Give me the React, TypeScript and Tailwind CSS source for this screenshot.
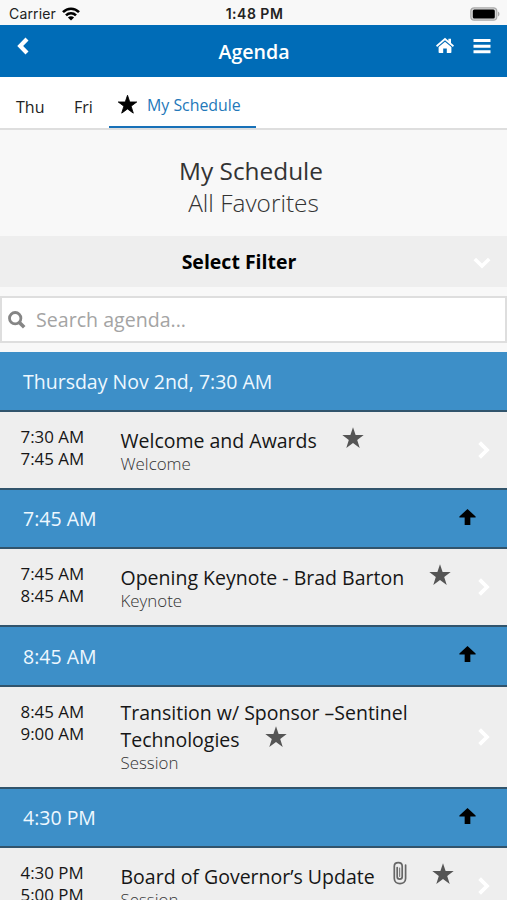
import React from "react";

const Star = ({ className = "" }: { className?: string }) => (
  <svg viewBox="0 0 22 22" className={"inline-block shrink-0 " + className} fill="currentColor">
    <path d="M11 0.3 13.6 8.1H21.7L15.2 12.9 17.7 21 11 16.1 4.3 21 6.8 12.9 0.3 8.1H8.4Z" />
  </svg>
);

const Clip = () => (
  <svg viewBox="0 0 14 24" className="h-6 w-3.5 shrink-0" fill="none" stroke="#666" strokeWidth="1.7" strokeLinecap="round">
    <path d="M4.2 6.5V15.8C4.2 18.9 9.2 18.9 9.2 15.8V5.2C9.2 .4 1.3.4 1.3 5.2V17.5C1.3 24.3 12.6 24.3 12.6 17.5V4" />
    <path d="M6.7 7V15.5" strokeWidth="1" />
  </svg>
);

const Chevron = () => (
  <svg viewBox="0 0 12 18" className="h-[18px] w-3 shrink-0" fill="none" stroke="#fff" strokeWidth="3.8">
    <path d="M1.6 1.6 9 9 1.6 16.4" />
  </svg>
);

function Band({ children, arrow = true, short = false }: { children: React.ReactNode; arrow?: boolean; short?: boolean }) {
  return (
    <div className={"flex items-center justify-between border-b-2 border-[#31546c] bg-[#3d8fc8] pl-[23px] pr-[31px] text-[19.5px] text-[#eef8ff] " + (short ? "h-[59px]" : "h-[60px]")}>
      <span className={short ? "pt-0" : "pt-0.5"}>{children}</span>
      {arrow && (
        <svg viewBox="0 0 18 18" className="mb-1 h-[18px] w-[17px]" fill="#000">
          <path d="M9 0.4 17.6 8.6V9.6H12V17.6H6V9.6H0.4V8.6Z" />
        </svg>
      )}
    </div>
  );
}

function Times({ a, b }: { a: string; b: string }) {
  return (
    <div className="w-[100px] shrink-0 pt-[14px] text-[16.9px] leading-[22px] text-[#161616]">
      <div>{a}</div>
      <div>{b}</div>
    </div>
  );
}

function Row({ a, b, kind, tall = false, children }: { a: string; b: string; kind: string; tall?: boolean; children: React.ReactNode }) {
  return (
    <div className={"flex shrink-0 border-b-2 border-[#31546c] bg-[#eeeeee] pl-[20.5px] pr-[17px] " + (tall ? "h-[102px]" : "h-[78px]")}>
      <Times a={a} b={b} />
      <div className={"min-w-0 flex-1 text-[19.5px] leading-[27px] text-[#161616] " + (tall ? "pt-[12px]" : "pt-[15px]")}>
        {children}
        <div className="text-[16.9px] font-light leading-[20px] text-[#333]">{kind}</div>
      </div>
      <div className="flex items-center">
        <Chevron />
      </div>
    </div>
  );
}

export default function App() {
  return (
    <div className="flex h-[900px] w-[507px] flex-col overflow-hidden bg-[#f8f8f8] font-['Open_Sans',sans-serif] [&>*]:shrink-0">
      <div className="grid h-[25px] grid-cols-3 items-center bg-[#f8f8f8] pl-[9px] pr-[7px] pt-0.5 font-['Inter',sans-serif] text-[14px] text-[#222]">
        <div className="flex items-center gap-[6px]">
          <span className="tracking-[0.15px]">Carrier</span>
          <svg viewBox="0 0 18 14" className="h-3.5 w-[18px]" fill="none" stroke="#000" strokeWidth="2.6">
            <path d="M1 5.2C5.5.6 12.5.6 17 5.2M4 8.4C6.8 5.6 11.2 5.6 14 8.4" />
            <path d="M9 13.5 5.9 10.4C7.6 8.8 10.4 8.8 12.1 10.4Z" fill="#000" stroke="none" />
          </svg>
        </div>
        <div className="text-center font-semibold tracking-[0.5px]">1:48 PM</div>
        <div className="flex justify-end">
          <svg viewBox="0 0 30 14" className="h-3.5 w-[30px]">
            <rect x=".8" y=".8" width="26" height="12.4" rx="3.5" fill="#d8d8d8" stroke="#aaa" strokeWidth="1.2" />
            <rect x="2.8" y="2.5" width="22" height="9" rx="1.5" fill="#000" />
            <path d="M28 4.5C30 5.5 30 8.5 28 9.5Z" fill="#aaa" />
          </svg>
        </div>
      </div>

      <header className="grid h-[52px] grid-cols-3 bg-[#006cb7] pl-[17px] pr-[16px] text-white">
        <svg viewBox="0 0 12 18" className="mt-3 h-[18px] w-3" fill="none" stroke="#fff" strokeWidth="4.2">
          <path d="M10 2 3.2 9 10 16" />
        </svg>
        <h1 className="text-center text-[19.6px] font-semibold leading-[54px]">Agenda</h1>
        <div className="flex justify-end gap-[19px] pt-3">
          <svg viewBox="0 0 18 17" className="h-[17px] w-[18px]" fill="#fff">
            <path d="M9 .8 12.4 3.7V1.8H15V6L18 8.6 16.9 10 9 3.3 1.1 10 0 8.6Z" />
            <path d="M9 4.7 15.4 10.1V15.2Q15.4 16 14.6 16H10.8V11.6H7.2V16H3.4Q2.6 16 2.6 15.2V10.1Z" />
          </svg>
          <svg viewBox="0 0 18 17" className="h-[17px] w-[18px]" fill="#fff">
            <path d="M.5 2H17.5V5H.5ZM.5 7.7H17.5V10.7H.5ZM.5 13.3H17.5V16.3H.5Z" />
          </svg>
        </div>
      </header>

      <nav className="flex h-[53px] border-b-2 border-[#dedede] bg-white pl-4 text-[16px] text-[#222]">
        <span className="w-[58px] leading-[60px]">Thu</span>
        <span className="w-[35px] leading-[60px]">Fri</span>
        <span className="flex w-[147px] border-b-[2.5px] border-[#1871b8] pl-[9px] text-[#2378b9]">
          <Star className="mt-[18px] h-[19px] w-[19px] overflow-visible stroke-black stroke-1 text-black [stroke-linejoin:round]" />
          <span className="pl-2.5 text-[15.9px] leading-[57px]">My Schedule</span>
        </span>
      </nav>

      <div className="h-[106px] pt-[25px] text-center text-[24.4px] leading-[32px]">
        <h2 className="pr-[5px] text-[#333]">My Schedule</h2>
        <h3 className="font-light text-[#333]">All Favorites</h3>
      </div>

      <div className="grid h-[51px] grid-cols-[1fr_auto_1fr] items-center bg-[#eeeeee] pl-4 pr-4">
        <span />
        <span className="pr-[29px] text-[19.5px] font-bold text-black">Select Filter</span>
        <svg viewBox="0 0 18 12" className="mt-0.5 h-3 w-[18px] justify-self-end" fill="none" stroke="#fff" strokeWidth="3.6">
          <path d="M1.8 2 9 9 16.2 2" />
        </svg>
      </div>

      <div className="mb-[9px] mt-[9px] flex h-[47px] items-center border-2 border-[#dedede] bg-white pl-1.5 text-[19.6px] text-[#a4a4a4]">
        <svg viewBox="0 0 18 18" className="mr-2.5 h-[18px] w-[18px]" fill="none" stroke="#858585">
          <circle cx="7.2" cy="7.2" r="5.7" strokeWidth="2.8" />
          <path d="M11.4 11.4 16.2 16.2" strokeWidth="3.6" />
        </svg>
        <span className="pt-px">Search agenda...</span>
      </div>

      <Band arrow={false}>Thursday Nov 2nd, 7:30 AM</Band>
      <Row a="7:30 AM" b="7:45 AM" kind="Welcome">
        <div className="flex">Welcome and Awards<Star className="ml-[25px] h-[22px] w-[22px] text-[#555]" /></div>
      </Row>
      <Band short>7:45 AM</Band>
      <Row a="7:45 AM" b="8:45 AM" kind="Keynote">
        <div className="flex">Opening Keynote - Brad Barton<Star className="ml-[25px] h-[22px] w-[22px] text-[#555]" /></div>
      </Row>
      <Band>8:45 AM</Band>
      <Row a="8:45 AM" b="9:00 AM" kind="Session" tall>
        <div>Transition w/ Sponsor –Sentinel</div>
        <div className="flex">Technologies<Star className="ml-[25px] h-[22px] w-[22px] text-[#555]" /></div>
      </Row>
      <Band short>4:30 PM</Band>
      <Row a="4:30 PM" b="5:00 PM" kind="Session">
        <div className="flex">Board of Governor’s Update<span className="-mt-[2px] ml-[18px] flex"><Clip /></span><Star className="ml-[25px] h-[22px] w-[22px] text-[#555]" /></div>
      </Row>
    </div>
  );
}
